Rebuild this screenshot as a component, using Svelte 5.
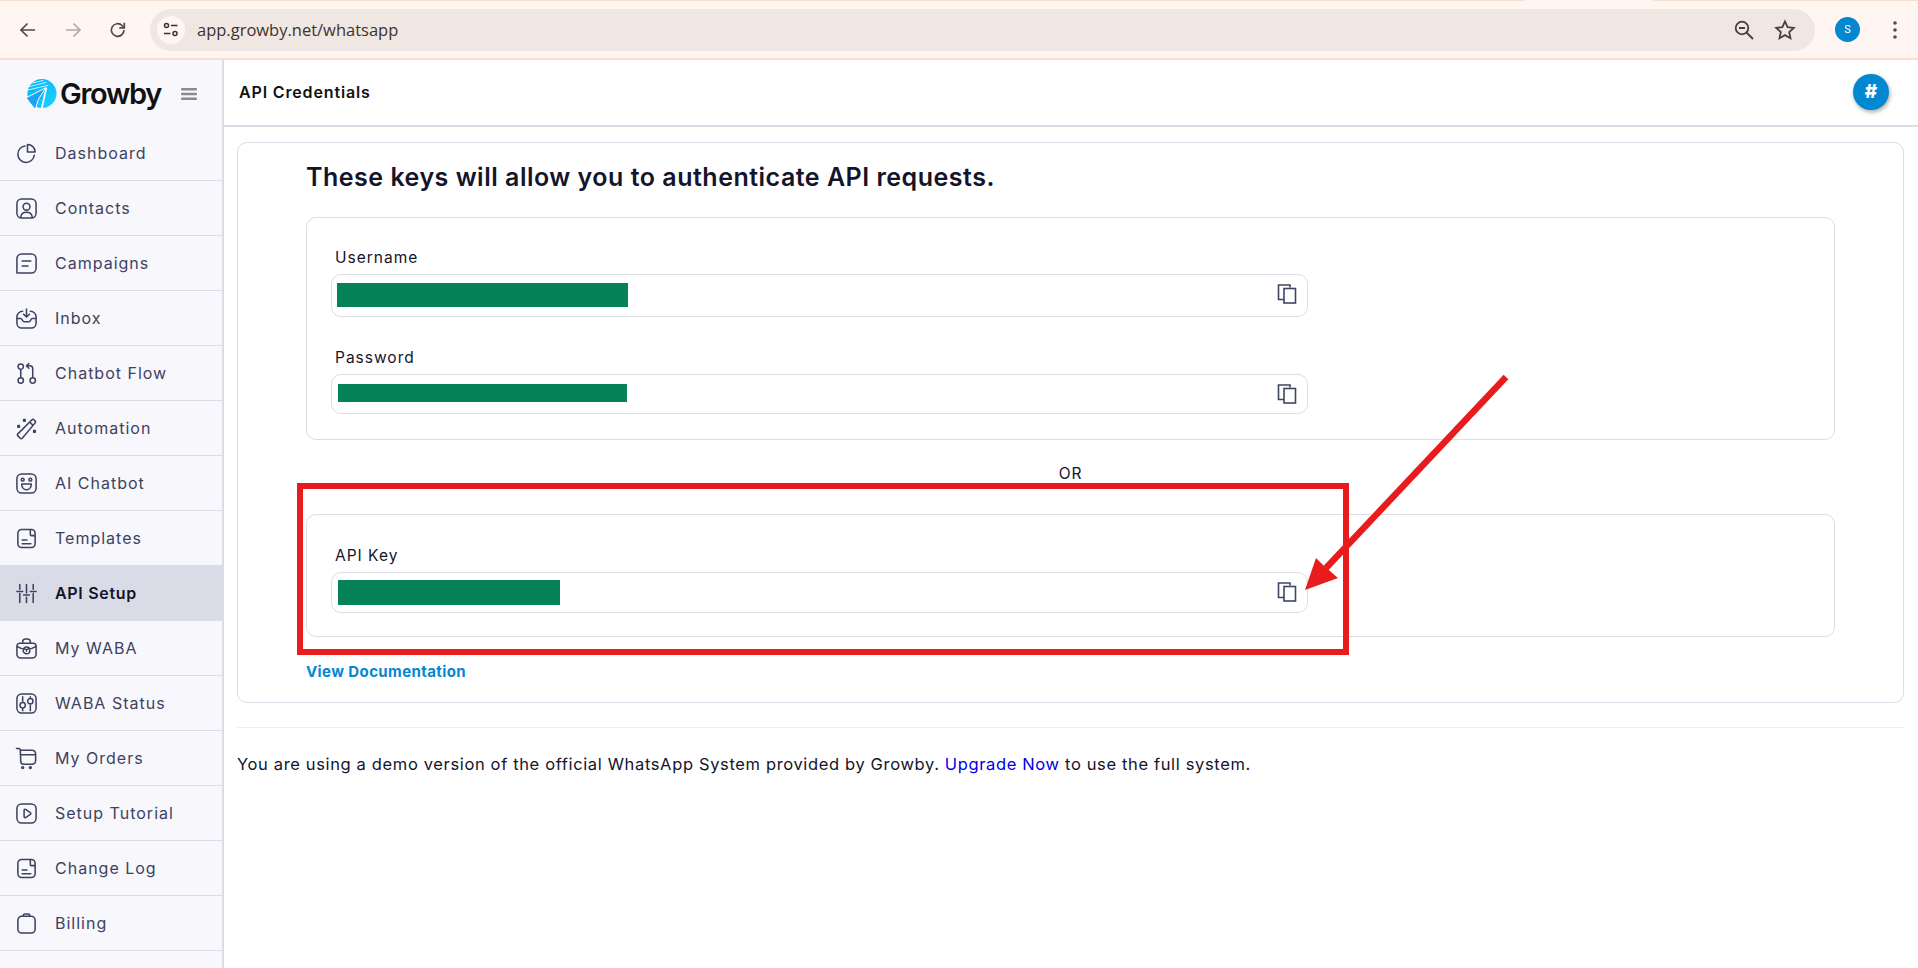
<script>
    const navItems = [
        { label: 'Dashboard', icon: 'M10.5 4.2a8.6 8.6 0 1 0 9.6 9.6M13 2.5v8h8a8 8 0 0 0-8-8z' },
        { label: 'Contacts', icon: 'M7 2h10a5 5 0 0 1 5 5v10a5 5 0 0 1-5 5H7a5 5 0 0 1-5-5V7a5 5 0 0 1 5-5zM12 6.5a3.6 3.6 0 1 0 0 7.2 3.6 3.6 0 0 0 0-7.2zM6 21c.5-3.5 3-5 6-5s5.500 1.500 6 5' },
        { label: 'Campaigns', icon: 'M7 2h10a5 5 0 0 1 5 5v10a5 5 0 0 1-5 5H2V7a5 5 0 0 1 5-5zM7.500 9.500h9M7.500 14.500h6' },
        { label: 'Inbox', icon: 'M8 4.500a6 6 0 0 0-6 6V17a5 5 0 0 0 5 5h10a5 5 0 0 0 5-5v-6.500a6 6 0 0 0-6-6M2 12h4c1.500 0 1.800 3.500 3.500 3.500h5c1.700 0 2-3.500 3.500-3.500h4M12 2v8M9 7.500l3 3 3-3' },
        { label: 'Chatbot Flow', icon: 'M6 2a2.800 2.800 0 1 0 0 5.600A2.800 2.800 0 0 0 6 2zM6 7.600v9M6 16.500a2.800 2.800 0 1 0 0 5.600 2.800 2.800 0 0 0 0-5.600zM18.500 16.500a2.800 2.800 0 1 0 0 5.600 2.800 2.800 0 0 0 0-5.600zM18.500 16.500V7a3 3 0 0 0-3-3H12M14.500 1.500 12 4l2.500 2.500' },
        { label: 'Automation', icon: 'M5.500 22.200 3 19.700a1.500 1.500 0 0 1 0-2.100L17.500 3.100a1.800 1.800 0 0 1 2.500 0l.8.8a1.800 1.800 0 0 1 0 2.500L7.600 22.200a1.500 1.500 0 0 1-2.100 0zM15.500 5.500l3 3M9 2.500h1.600v1.800H9zM3 9h1.600v1.800H3zM19.500 14h1.600v1.800h-1.600z' },
        { label: 'AI Chatbot', icon: 'M7 2h10a5 5 0 0 1 5 5v10a5 5 0 0 1-5 5H7a5 5 0 0 1-5-5V7a5 5 0 0 1 5-5zM8 6.500a1.500 1.500 0 1 0 0 3 1.500 1.500 0 0 0 0-3zM16 6.500a1.500 1.500 0 1 0 0 3 1.500 1.500 0 0 0 0-3zM7 12.500h10c0 3.500-2 6-5 6s-5-2.500-5-6z' },
        { label: 'Templates', icon: 'M7 2.500h10a4 4 0 0 1 4 4v11a4 4 0 0 1-4 4H7a4 4 0 0 1-4-4v-11a4 4 0 0 1 4-4zM16 2.500V8a1 1 0 0 0 1 1h4M7.500 13.500h5M7.500 17.500h9' },
        { label: 'API Setup', active: true, icon: 'M5 2.500v5M5 12v9.500M12 2.500v9M12 16v5.500M19 2.500v5M19 12v9.500M2 10h6M9 13.500h6M16 10h6' },
        { label: 'My WABA', icon: 'M5 6.500h14a3 3 0 0 1 3 3V18a4 4 0 0 1-4 4H6a4 4 0 0 1-4-4V9.500a3 3 0 0 1 3-3zM8 6.500V5a3 3 0 0 1 3-3h2a3 3 0 0 1 3 3v1.500M2.500 10c4 2.500 6 3 9.500 3s5.500-.5 9.500-3M12 10.500a3.500 3.500 0 1 0 0 7 3.500 3.500 0 0 0 0-7zM12 13.200v1.600' },
        { label: 'WABA Status', icon: 'M7 2h10a5 5 0 0 1 5 5v10a5 5 0 0 1-5 5H7a5 5 0 0 1-5-5V7a5 5 0 0 1 5-5zM8 5v5M8 17v2.500M8 11a2.800 2.800 0 1 0 0 5.600A2.800 2.800 0 0 0 8 11zM16 14v5.500M16 5v1.500M16 6.800a2.800 2.800 0 1 0 0 5.600 2.800 2.800 0 0 0 0-5.600z' },
        { label: 'My Orders', icon: 'M1.500 1.500H4a1.500 1.500 0 0 1 1.500 1.500L6 15a3 3 0 0 0 3 3h9a3.500 3.500 0 0 0 3.500-3.500V7a3.500 3.500 0 0 0-3.500-3.500H5.500M5.500 8h16M8 20.500a1 1 0 1 0 0 2 1 1 0 0 0 0-2zM16 20.500a1 1 0 1 0 0 2 1 1 0 0 0 0-2z' },
        { label: 'Setup Tutorial', icon: 'M7 2h10a5 5 0 0 1 5 5v10a5 5 0 0 1-5 5H7a5 5 0 0 1-5-5V7a5 5 0 0 1 5-5zM9.500 8.500a1 1 0 0 1 1.500-.8l5 3.300a1.100 1.100 0 0 1 0 1.900l-5 3.300a1 1 0 0 1-1.500-.8z' },
        { label: 'Change Log', icon: 'M7 2.500h10a4 4 0 0 1 4 4v11a4 4 0 0 1-4 4H7a4 4 0 0 1-4-4v-11a4 4 0 0 1 4-4zM16 2.500V8a1 1 0 0 0 1 1h4M7.500 13.500h5M7.500 17.500h9' },
        { label: 'Billing', icon: 'M7 4.500h10a4 4 0 0 1 4 4V18a4 4 0 0 1-4 4H7a4 4 0 0 1-4-4V8.500a4 4 0 0 1 4-4zM8.500 4.500V3.800A1.800 1.800 0 0 1 10.300 2h3.400a1.800 1.800 0 0 1 1.800 1.800v.7' }
    ];

    const loginFields = [
        { label: 'Username', bar: 291, barHeight: 24, barInset: 5, height: 43, top: 8 },
        { label: 'Password', bar: 289, barHeight: 18, barInset: 6, height: 40, top: 9 }
    ];
</script>

{#snippet copyIcon()}
    <svg class="copy" width="20" height="20" viewBox="0 0 20 20" fill="none" stroke="#3f4663" stroke-width="1.600">
        <path d="M7 15.500H1.500V1h11.500v2.500" />
        <rect x="7" y="4.500" width="11.500" height="14.500" />
    </svg>
{/snippet}

{#snippet field(label, bar, barHeight, barInset, height, top)}
    <div class="field">
        <div class="field-label">{label}</div>
        <div class="input" style="height: {height}px; padding-top: {top}px; padding-left: {barInset}px">
            <div class="redact" style="width: {bar}px; height: {barHeight}px"></div>
            {@render copyIcon()}
        </div>
    </div>
{/snippet}

<div class="browser">
    <svg class="tb-icon" width="20" height="20" viewBox="0 0 20 20" fill="none" stroke="#564a42" stroke-width="1.700">
        <path d="M17 10H3.500M9.500 3.500 3 10l6.500 6.500" />
    </svg>
    <svg class="tb-icon fwd" width="20" height="20" viewBox="0 0 20 20" fill="none" stroke="#b3a9a2" stroke-width="1.700">
        <path d="M3 10h13.500M10.500 3.500 17 10l-6.500 6.500" />
    </svg>
    <svg class="tb-icon reload" width="20" height="20" viewBox="0 0 20 20" fill="none" stroke="#564a42" stroke-width="1.700">
        <path d="M16 10a6.300 6.300 0 1 1-1.900-4.500L16 7.500" /><path d="M16.300 2.800v5h-5" />
    </svg>
    <div class="omnibox">
        <span class="tune">
            <svg width="16" height="16" viewBox="0 0 16 16" fill="none" stroke="#3d332d" stroke-width="1.500">
                <circle cx="3.500" cy="3.500" r="2" /><path d="M8 3.500h6.500M1 11.500h6.500" /><circle cx="12" cy="11.500" r="2" />
            </svg>
        </span>
        <span class="url">app.growby.net/whatsapp</span>
        <svg class="zoom-out" width="22" height="22" viewBox="0 0 22 22" fill="none" stroke="#4a403a" stroke-width="1.800">
            <circle cx="9" cy="9" r="6.300" /><path d="M6 9h6M13.500 13.500l6.500 6.500" />
        </svg>
        <svg class="star" width="22" height="22" viewBox="0 0 22 22" fill="none" stroke="#4a403a" stroke-width="1.800">
            <path d="M11 2.500l2.600 5.700 6.200.7-4.600 4.200 1.300 6.100L11 16.100l-5.500 3.100 1.300-6.100-4.600-4.200 6.200-.7z" />
        </svg>
    </div>
    <span class="avatar">S</span>
    <svg class="dots" width="6" height="20" viewBox="0 0 6 20" fill="#564a42">
        <circle cx="3" cy="3" r="1.800" /><circle cx="3" cy="10" r="1.800" /><circle cx="3" cy="17" r="1.800" />
    </svg>
</div>

<div class="layout">
    <aside class="sidebar">
        <div class="brand">
            <svg class="logo" width="31" height="33" viewBox="0 0 32 33">
                <defs>
                    <linearGradient id="lg" x1="0" y1="0" x2="1" y2="1">
                        <stop offset="0" stop-color="#00b4f5" /><stop offset="1" stop-color="#1fd0ff" />
                    </linearGradient>
                </defs>
                <circle cx="16.500" cy="16.500" r="15" fill="url(#lg)" />
                <path d="M3 9.500 21 5M1.500 13 23 8M5 6 18 3" stroke="#fff" stroke-width=".8" />
                <path d="M21 10.500 16 33" stroke="#fff" stroke-width="1.800" />
                <path d="M20.500 10.500 0 21l9.500 12 3.500-11z" fill="#1ba2f3" stroke="#fff" stroke-width="1" />
            </svg>
            <span class="brand-name">Growby</span>
            <svg class="burger" width="16" height="12" viewBox="0 0 16 12" fill="#8a8a8f">
                <rect width="16" height="2.400" rx="1" /><rect y="4.800" width="16" height="2.400" rx="1" /><rect y="9.600" width="16" height="2.400" rx="1" />
            </svg>
        </div>
        <nav>
            {#each navItems as item}
                <div class="nav-item" class:active={item.active}>
                    <svg width="23" height="23" viewBox="0 0 24 24" fill="none" stroke="#3d4260" stroke-width="1.600" stroke-linecap="round" stroke-linejoin="round">
                        <path d={item.icon} />
                    </svg>
                    <span>{item.label}</span>
                </div>
            {/each}
        </nav>
    </aside>

    <main>
        <header class="topbar">
            <h1>API Credentials</h1>
            <span class="hash">#</span>
        </header>

        <div class="content">
            <section class="card">
                <h2>These keys will allow you to authenticate API requests.</h2>

                <div class="inner login">
                    {#each loginFields as f}
                        {@render field(f.label, f.bar, f.barHeight, f.barInset, f.height, f.top)}
                    {/each}
                </div>

                <div class="or">OR</div>

                <div class="inner apikey">
                    {@render field('API Key', 222, 25, 6, 41, 7)}
                </div>

                <a class="docs" href="#docs">View Documentation</a>
            </section>

            <hr />

            <p class="notice">
                You are using a demo version of the official WhatsApp System provided by Growby.
                <a href="#upgrade">Upgrade Now</a> to use the full system.
            </p>
        </div>
    </main>
</div>

<!-- annotation drawn over the screenshot -->
<div class="callout"></div>
<svg class="arrow" width="1918" height="968" viewBox="0 0 1918 968">
    <path d="M1506 377 1326 568" stroke="#e81c1c" stroke-width="6.500" fill="none" />
    <path d="M1305 590 1316 558 1324 566 1330 571 1338 578z" fill="#e81c1c" />
</svg>

<style>
    :global(body) {
        margin: 0;
        background: #fff;
        overflow: hidden;
        font-family: Inter, "Open Sans", sans-serif;
        color: #14142b;
    }

    .browser {
        position: relative;
        height: 57px;
        border-top: 1px solid #f5e0d1;
        border-bottom: 2px solid #f5dfcf;
        background: #fff6f2;
        display: flex;
        align-items: center;
        padding-left: 18px;
        box-sizing: content-box;
    }

    /* bottom edge of the active tab, just visible above the toolbar */
    .browser::before {
        content: '';
        position: absolute;
        left: 1525px;
        top: -1px;
        width: 128px;
        height: 1px;
        background: #fff6f2;
    }

    .tb-icon {
        margin-right: 25px;
        flex: none;
    }

    .tb-icon.reload {
        margin-right: 22px;
    }

    .omnibox {
        width: 1665px;
        height: 42px;
        border-radius: 21px;
        background: #f0e7e2;
        display: flex;
        align-items: center;
        padding: 0 19px 0 7px;
        box-sizing: border-box;
    }

    .tune {
        width: 28px;
        height: 28px;
        border-radius: 50%;
        background: #fff6f2;
        display: flex;
        align-items: center;
        justify-content: center;
        margin-right: 12px;
    }

    .url {
        font-family: "Open Sans", sans-serif;
        font-size: 16.500px;
        color: #3d332d;
        flex: 1;
    }

    .zoom-out {
        margin-right: 19px;
    }

    .avatar {
        width: 25px;
        height: 25px;
        border-radius: 50%;
        background: #0288d1;
        color: #fff;
        font: 11px Roboto, sans-serif;
        display: flex;
        align-items: center;
        justify-content: center;
        margin-left: 20px;
    }

    .dots {
        margin-left: 32px;
    }

    .layout {
        display: flex;
        height: 908px;
    }

    .sidebar {
        width: 224px;
        flex: none;
        box-sizing: border-box;
        background: #f7f7fc;
        border-right: 2px solid #dcdce8;
    }

    .brand {
        height: 66px;
        display: flex;
        align-items: center;
        padding-left: 26px;
        padding-top: 1px;
        box-sizing: border-box;
    }

    .logo {
        flex: none;
    }

    .brand-name {
        font-size: 29px;
        font-weight: 600;
        letter-spacing: -1.300px;
        color: #111;
        margin-left: 3px;
    }

    .burger {
        margin-left: 20px;
    }

    .nav-item {
        height: 55px;
        box-sizing: border-box;
        border-bottom: 1px solid #dcdce8;
        display: flex;
        align-items: center;
        padding-left: 15px;
        font-size: 16px;
        letter-spacing: 1px;
        color: #3d4260;
    }

    .nav-item svg {
        margin-right: 17px;
        flex: none;
    }

    .nav-item.active {
        background: #d9dbe7;
        font-weight: 600;
        letter-spacing: 0.700px;
        color: #14142b;
    }

    main {
        flex: 1;
        min-width: 0;
    }

    .topbar {
        height: 67px;
        box-sizing: border-box;
        border-bottom: 2px solid #dcdce8;
        display: flex;
        align-items: center;
        justify-content: space-between;
        padding: 0 29px 2px 15px;
    }

    h1 {
        margin: 0;
        font-size: 16px;
        font-weight: 600;
        letter-spacing: 0.850px;
        color: #111;
    }

    .hash {
        width: 36px;
        height: 36px;
        border-radius: 50%;
        background: #0288d1;
        box-shadow: 1px 2px 4px rgba(0, 0, 0, 0.35);
        color: #fff;
        font-size: 19px;
        font-weight: 800;
        display: flex;
        align-items: center;
        justify-content: center;
    }

    .content {
        padding: 15px 14px 0 13px;
    }

    .card {
        height: 561px;
        box-sizing: border-box;
        border: 1px solid #dcdce8;
        border-radius: 10px;
        padding: 18px 68px 0 68px;
    }

    h2 {
        margin: 0 0 23px;
        height: 33px;
        line-height: 33px;
        font-size: 25px;
        font-weight: 600;
        letter-spacing: 0.500px;
        color: #14142b;
    }

    .inner {
        border: 1px solid #dcdce8;
        border-radius: 10px;
        padding: 30px 24px 0;
        box-sizing: border-box;
    }

    .inner.login {
        height: 223px;
    }

    .inner.apikey {
        height: 123px;
        padding-top: 31px;
    }

    .field {
        margin-bottom: 31px;
    }

    .field-label {
        font-size: 15.500px;
        line-height: 20px;
        margin-bottom: 6px;
        padding-left: 4px;
        letter-spacing: 1px;
    }

    .input {
        position: relative;
        width: 977px;
        box-sizing: border-box;
        border: 1px solid #dcdce8;
        border-radius: 10px;
    }

    .redact {
        background: #058257;
    }

    .copy {
        position: absolute;
        right: 10px;
        top: 9px;
    }

    .or {
        text-align: center;
        height: 74px;
        line-height: 68px;
        font-size: 15.500px;
        letter-spacing: 0.800px;
    }

    .docs {
        display: block;
        margin-top: 25px;
        font-size: 15px;
        font-weight: 700;
        letter-spacing: 0.400px;
        color: #0288d1;
        text-decoration: none;
    }

    hr {
        border: 0;
        border-top: 1px solid #eee;
        margin: 24px 0 19px;
    }

    .notice {
        margin: 0;
        font-size: 16.500px;
        line-height: 34px;
        letter-spacing: 0.640px;
    }

    .notice a {
        color: #0000e6;
        text-decoration: none;
    }

    .callout {
        position: absolute;
        left: 297px;
        top: 483px;
        width: 1052px;
        height: 172px;
        box-sizing: border-box;
        border: 6px solid #e81c1c;
    }

    .arrow {
        position: absolute;
        left: 0;
        top: 0;
        pointer-events: none;
    }
</style>
